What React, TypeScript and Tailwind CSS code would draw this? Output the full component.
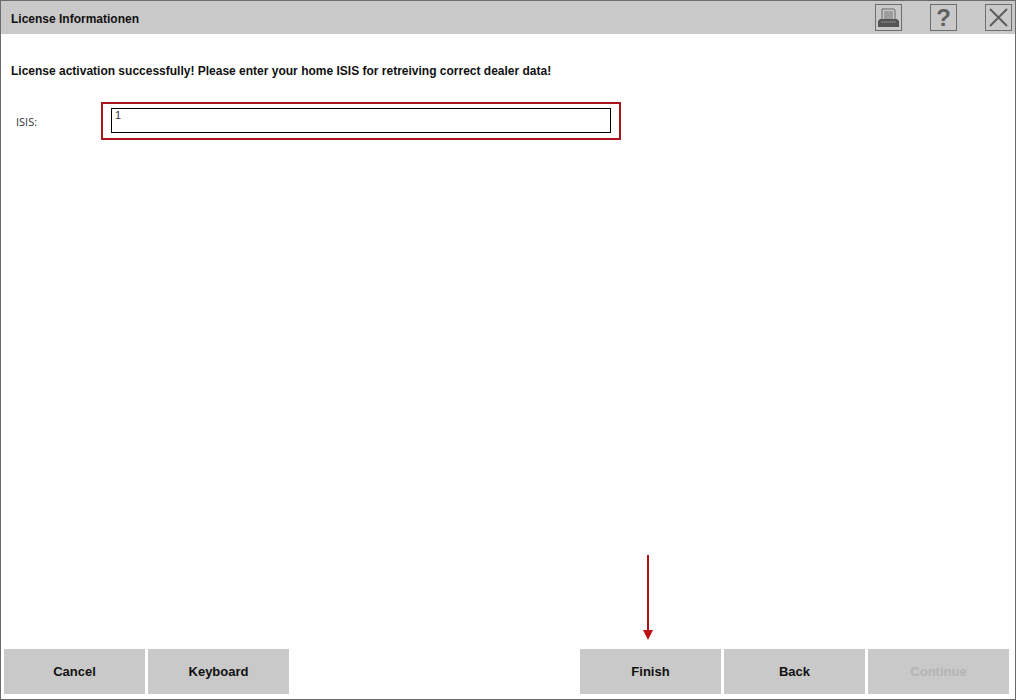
function IconBox(props: { children: React.ReactNode }) {
  return (
    <div className="w-[27px] h-[27px] border border-[#6e6e6e] flex items-center justify-center">
      {props.children}
    </div>
  );
}

function FooterButton(props: { label: string; disabled?: boolean }) {
  return (
    <div
      className={`w-[141px] h-[45px] bg-[#c9c9c9] flex items-center justify-center text-[13px] font-bold ${
        props.disabled ? 'text-[#b4b4b4]' : 'text-[#111111]'
      }`}
    >
      {props.label}
    </div>
  );
}

export default function App() {
  return (
    <div className="relative w-[1016px] h-[700px] bg-white border border-[#6b6b6b] flex flex-col overflow-hidden font-['Liberation_Sans',Arial,sans-serif]">
      {/* title bar */}
      <div className="h-[33px] bg-[#c9c9c9] flex items-center justify-between pl-[10px] pr-[3px]">
        <span className="text-[12px] font-bold text-[#111111] pt-[2px]">License Informationen</span>
        <div className="flex items-center gap-[28px]">
          <IconBox>
            <svg width="23" height="21" viewBox="0 0 23 21">
              <path d="M5 2h12l1 1v10H5z" fill="#c9c9c9" stroke="#666666" strokeWidth="1" />
              <path d="M7 5h9M7 7h9M7 9h9M7 11h9" stroke="#707070" strokeWidth="1" />
              <path d="M3 12h17l2 2v6H1v-6z" fill="#555555" />
              <path d="M4 15h15" stroke="#8a8a8a" strokeWidth="1" />
            </svg>
          </IconBox>
          <IconBox>
            <span className="text-[24px] leading-none font-bold text-[#606060]">?</span>
          </IconBox>
          <IconBox>
            <svg width="21" height="21" viewBox="0 0 21 21">
              <path d="M2 2l17 17M19 2L2 19" stroke="#5a5a5a" strokeWidth="1.8" fill="none" />
            </svg>
          </IconBox>
        </div>
      </div>

      {/* body */}
      <div className="flex-1 flex flex-col pl-[10px] pt-[30px]">
        <p className="text-[12px] leading-[14px] font-bold text-[#111111]">
          License activation successfully! Please enter your home ISIS for retreiving correct dealer data!
        </p>
        <div className="flex items-center mt-[24px]">
          <span className="w-[90px] pl-[5px] pt-[2px] text-[11px] text-[#333333] font-['Open_Sans',sans-serif]">
            ISIS:
          </span>
          <div className="w-[520px] h-[38px] border-2 border-[#a8151c] pt-[4px] pl-[8px]">
            <div className="w-[500px] h-[25px] border border-black pl-[3px] text-[11px] leading-[13px] text-[#333333]">
              1
            </div>
          </div>
        </div>
      </div>

      {/* footer */}
      <div className="h-[45px] mb-[5px] flex justify-between pl-[3px] pr-[6px]">
        <div className="flex gap-[3px]">
          <FooterButton label="Cancel" />
          <FooterButton label="Keyboard" />
        </div>
        <div className="flex gap-[3px]">
          <FooterButton label="Finish" />
          <FooterButton label="Back" />
          <FooterButton label="Continue" disabled />
        </div>
      </div>

      {/* annotation arrow */}
      <svg className="absolute left-[641px] top-[554px]" width="12" height="86" viewBox="0 0 12 86">
        <path d="M6 0v78" stroke="#b01116" strokeWidth="2" fill="none" />
        <path d="M1 75h10l-5 10z" fill="#c00f14" />
      </svg>
    </div>
  );
}
